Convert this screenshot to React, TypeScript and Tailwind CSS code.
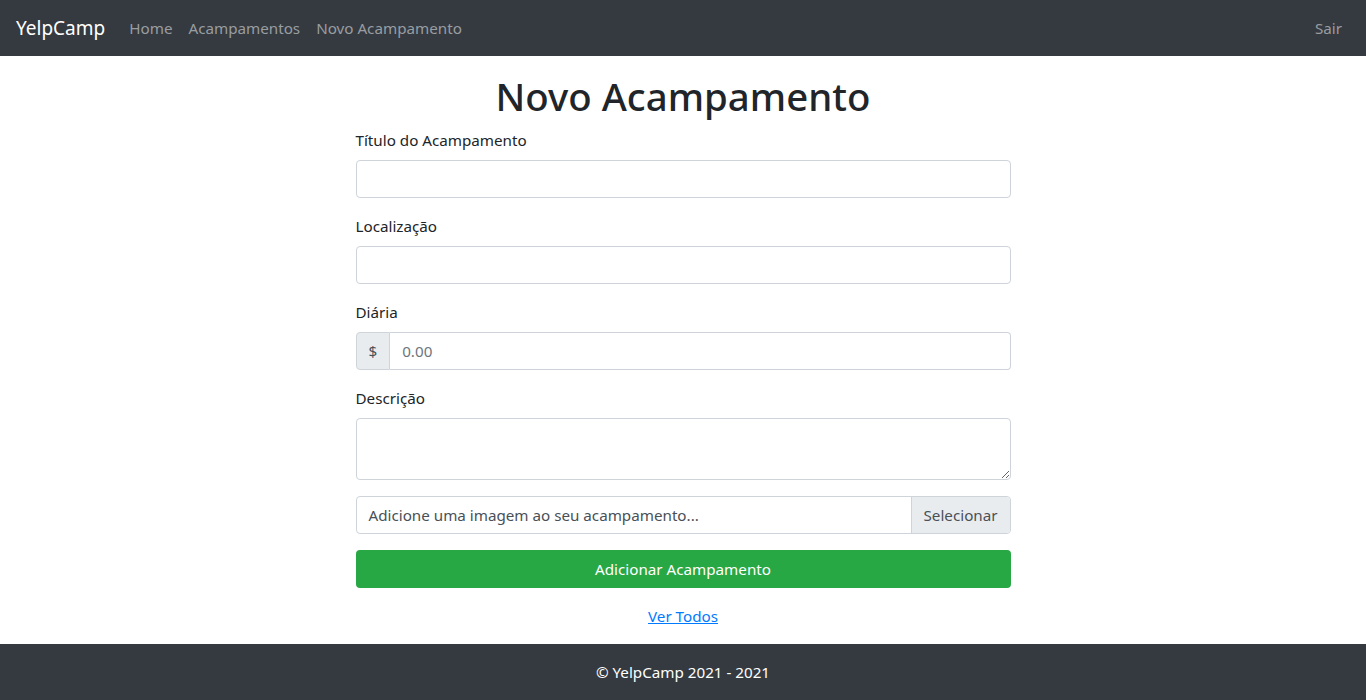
import React from "react";

export default function App() {
  const font = { fontFamily: '"Noto Sans", "Segoe UI", Roboto, sans-serif' };
  return (
    <div className="min-h-[700px] flex flex-col bg-white text-[#212529] text-[15.2px] leading-6" style={font}>
      <nav className="h-14 bg-[#343a40] flex items-center px-4 shrink-0">
        <a className="text-white text-[19px] leading-[30px] mr-4">YelpCamp</a>
        <div className="flex">
          <a className="px-2 text-[#9a9da0]">Home</a>
          <a className="px-2 text-[#9a9da0]">Acampamentos</a>
          <a className="px-2 text-[#9a9da0]">Novo Acampamento</a>
        </div>
        <div className="ml-auto">
          <a className="px-2 text-[#9a9da0]">Sair</a>
        </div>
      </nav>

      <main className="flex-1 mt-4">
        <div className="w-[655px] mx-auto">
          <h1 className="text-center text-[38.4px] leading-[48px] font-medium mb-2">Novo Acampamento</h1>
          <div className="mb-4">
            <label className="block mb-2">Título do Acampamento</label>
            <input className="block w-full h-[38px] border border-[#ced4da] rounded px-3 outline-none" />
          </div>
          <div className="mb-4">
            <label className="block mb-2">Localização</label>
            <input className="block w-full h-[38px] border border-[#ced4da] rounded px-3 outline-none" />
          </div>
          <div className="mb-4">
            <label className="block mb-2">Diária</label>
            <div className="flex h-[38px]">
              <span className="flex items-center px-3 bg-[#e9ecef] border border-[#ced4da] rounded-l text-[#495057]">$</span>
              <input
                className="flex-1 border border-l-0 border-[#ced4da] rounded-r px-3 outline-none placeholder:text-[#6c757d]"
                placeholder="0.00"
              />
            </div>
          </div>
          <div className="mb-4">
            <label className="block mb-2">Descrição</label>
            <textarea rows={2} className="block w-full h-[62px] border border-[#ced4da] rounded px-3 py-1.5 outline-none" />
          </div>
          <div className="mb-4 flex h-[38px] border border-[#ced4da] rounded overflow-hidden">
            <div className="flex-1 flex items-center px-3 text-[#495057]">Adicione uma imagem ao seu acampamento...</div>
            <div className="flex items-center px-3 bg-[#e9ecef] border-l border-[#ced4da] text-[#495057]">Selecionar</div>
          </div>
          <button className="w-full h-[38px] bg-[#28a745] text-white rounded">Adicionar Acampamento</button>
          <div className="text-center mt-4 mb-4">
            <a className="text-[#007bff] underline">Ver Todos</a>
          </div>
        </div>
      </main>

      <footer className="bg-[#343a40] py-4 text-center text-white shrink-0">© YelpCamp 2021 - 2021</footer>
    </div>
  );
}
